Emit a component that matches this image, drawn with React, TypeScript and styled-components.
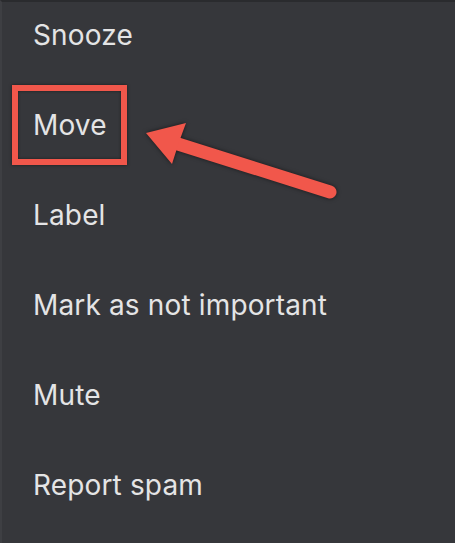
import React from "react";
import styled, { createGlobalStyle } from "styled-components";

const GlobalStyle = createGlobalStyle`
  html, body {
    margin: 0;
    padding: 0;
    background: #36373b;
  }
`;

const Sheet = styled.div`
  position: relative;
  width: 455px;
  height: 543px;
  overflow: hidden;
  background: #36373b;
  border-top: 2px solid #2a2b2e;
  border-left: 2px solid #3e3f43;
  box-sizing: border-box;
  font-family: Inter, "Liberation Sans", sans-serif;
`;

const Menu = styled.ul`
  list-style: none;
  margin: 0;
  padding: 0;
`;

const Item = styled.li<{ $first?: boolean }>`
  height: 90px;
  box-sizing: border-box;
  padding-left: 31px;
  display: flex;
  align-items: center;
  margin-top: ${(p) => (p.$first ? "-12px" : "0")};
`;

const Label = styled.span<{ $marked?: boolean }>`
  position: relative;
  font-size: 28px;
  color: #e4e4e5;
  letter-spacing: 0.15px;

  ${(p) =>
    p.$marked &&
    `
    &::before {
      content: "";
      position: absolute;
      left: -21px;
      right: -20px;
      top: -23px;
      bottom: -23px;
      border: 6px solid #f1574b;
      box-shadow: 0 0 3px rgba(0,0,0,0.5), inset 0 0 3px rgba(0,0,0,0.5);
    }
  `}
`;

const Arrow = styled.svg`
  position: absolute;
  left: 0;
  top: 0;
  pointer-events: none;
  filter: drop-shadow(0 0 2px rgba(0, 0, 0, 0.55));
`;

const items = [
  "Snooze",
  "Move",
  "Label",
  "Mark as not important",
  "Mute",
  "Report spam",
];

const App = () => {
  return (
    <>
      <GlobalStyle />
      <Sheet>
        <Menu>
          {items.map((label, i) => (
            <Item key={label} $first={i === 0}>
              <Label $marked={label === "Move"}>{label}</Label>
            </Item>
          ))}
        </Menu>
        <Arrow width="455" height="543" viewBox="0 0 455 543">
          <line
            x1="328"
            y1="190"
            x2="176"
            y2="142"
            stroke="#f1574b"
            strokeWidth="13"
            strokeLinecap="round"
          />
          <polygon
            points="144,131 184,121 177,140 170,162"
            fill="#f1574b"
          />
        </Arrow>
      </Sheet>
    </>
  );
};

export default App;
